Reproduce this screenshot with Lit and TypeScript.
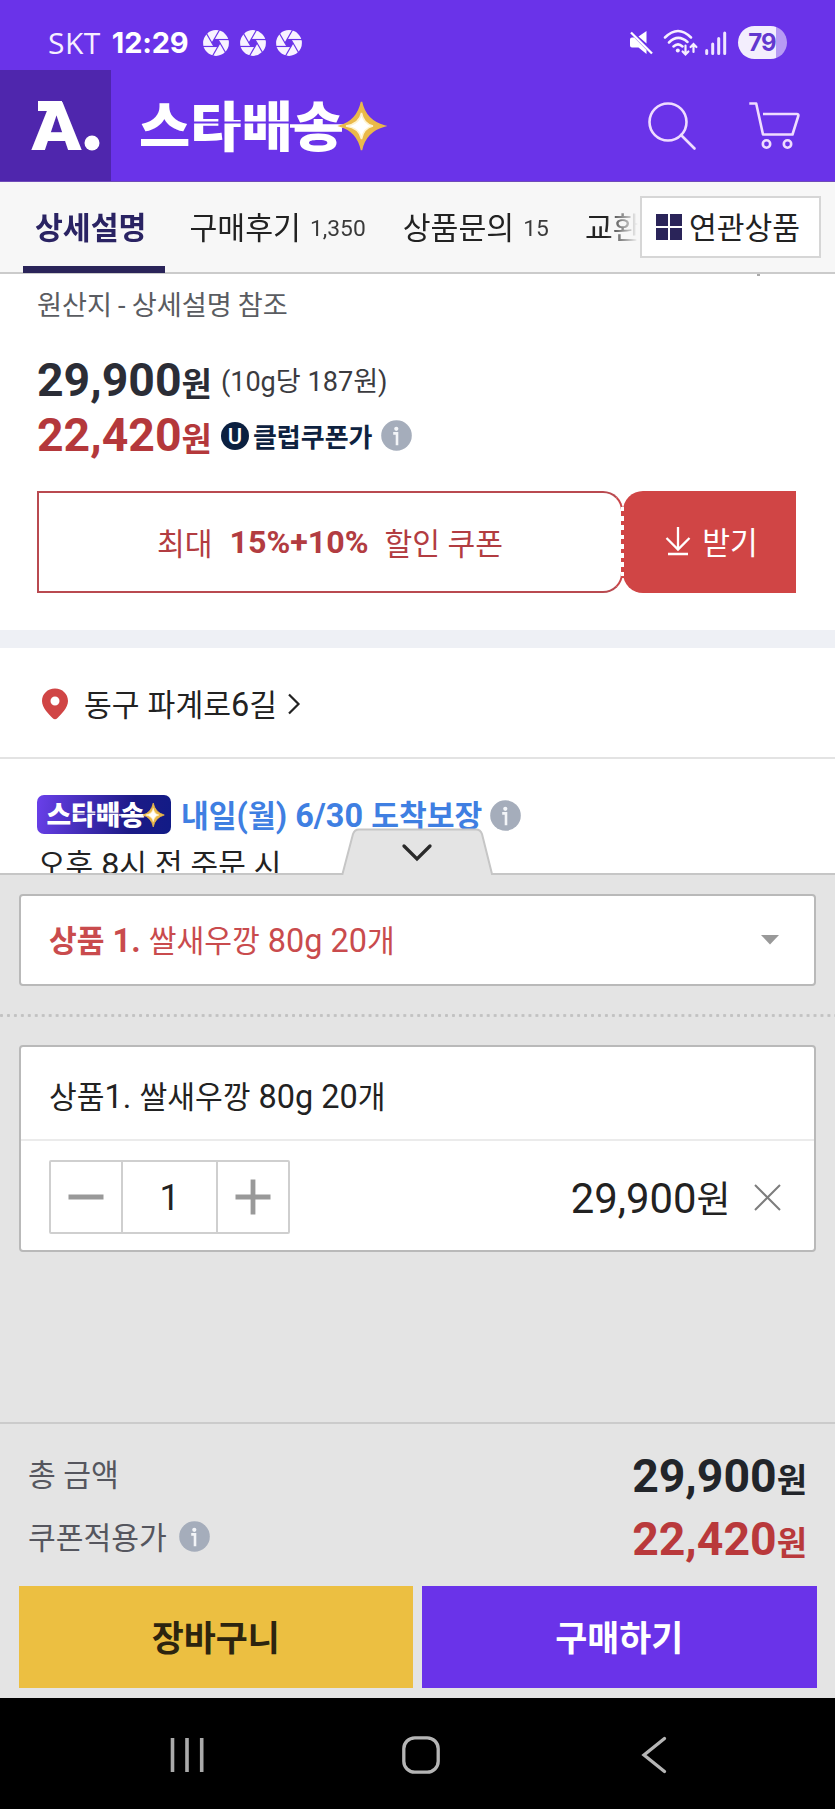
import { LitElement, html, css, svg } from "lit";
import { customElement, property, state } from "lit/decorators.js";

const won = (n: number) => n.toLocaleString("en-US");

// Latin runs are set slightly larger than the Hangul around them.
const mixed = (text: string) =>
  text.split(/([0-9A-Za-z./() ]+)/).map((part, i) => (i % 2 ? html`<span class="latin">${part}</span>` : part));

const base = css`
  * { box-sizing: border-box; }
  svg { display: block; flex: none; }
  .row { display: flex; align-items: center; white-space: nowrap; }
  .latin { font-size: 1.075em; line-height: 1; white-space: pre; }
`;

@customElement("info-dot")
class InfoDot extends LitElement {
  static styles = css`
    :host { display: block; flex: none; width: 31px; height: 31px; }
    svg { display: block; }
  `;
  render() {
    return html`<svg width="31" height="31" viewBox="0 0 31 31">
      <circle cx="15.5" cy="15.5" r="15.3" fill="#a5adbb" />
      <circle cx="15.3" cy="8.8" r="2.1" fill="#f3f5f8" />
      <path d="M12.2 13.4h3.8v11.8" fill="none" stroke="#f3f5f8" stroke-width="2.6" />
    </svg>`;
  }
}

@customElement("star-logo")
class StarLogo extends LitElement {
  @property({ type: Number }) width = 246;
  @property({ type: Number }) height = 56;
  @property() cut = "#6a33e9";
  static styles = css`
    :host { display: block; flex: none; }
    svg { display: block; overflow: visible; }
    text { font: 900 54px "Noto Sans CJK KR", sans-serif; }
  `;
  render() {
    return html`<svg width=${this.width} height=${this.height} viewBox="0 0 246 56" preserveAspectRatio="none">
      <text x="-1" y="48.500" fill="#fff" textLength="205" lengthAdjust="spacingAndGlyphs">스타배송</text>
      <path d="M52 24.500H156" stroke=${this.cut} stroke-width="1.800" />
      <path d="M150 28H222" stroke="#fff" stroke-width="3.400" />
      <path d="M221.500 4Q225.500 23 244.500 28Q225.500 33 221.500 52Q217.500 33 200 28Q217.500 23 221.500 4Z" fill="#eab94a" stroke="#eab94a" stroke-width="1.500" />
      <path d="M221.500 15Q223.500 26 233 28Q223.500 30 221.500 41Q219.500 30 206 28Q219.500 26 221.500 15Z" fill="#fff" stroke="#fff3cf" stroke-width="1.500" />
    </svg>`;
  }
}

@customElement("status-bar")
class StatusBar extends LitElement {
  static styles = [base, css`
    :host { display: block; height: 70px; background: #6a33e9; color: #f6efff; }
    .bar { height: 70px; padding: 15px 48px 0 48px; justify-content: space-between; }
    .carrier { font: 400 30px/40px "Open Sans", sans-serif; letter-spacing: .5px; }
    .time { font: 700 29px/40px Inter, sans-serif; margin-left: 11px; letter-spacing: -.2px; color: #fff; }
    .apps { display: flex; gap: 10.5px; margin-left: 15px; }
    .wifi { margin-left: 9px; }
    .signal { margin-left: 6px; }
    .battery { width: 49px; height: 33px; border-radius: 17px; margin-left: 11px; padding-right: 1px;
      background: linear-gradient(90deg, #f3eefd 0 38px, #b79bf4 38px); color: #6338cf;
      font: 700 24px/33px Inter, sans-serif; text-align: center; letter-spacing: -1px; }
  `];
  aperture() {
    const blades = [0, 60, 120, 180, 240, 300].map(
      (a) => svg`<path d="M-2 -3.460H13" transform="rotate(${a})" stroke="#6a33e9" stroke-width="1.200" />`);
    return html`<svg width="26" height="26" viewBox="-13 -13 26 26">
      <circle r="12.900" fill="#f8f3ff" />${blades}
      <path d="M-2 -3.460H2L4 0L2 3.460H-2L-4 0Z" fill="#6a33e9" />
    </svg>`;
  }
  render() {
    return html`<div class="row bar">
      <div class="row">
        <span class="carrier">SKT</span><span class="time">12:29</span>
        <div class="apps">${this.aperture()}${this.aperture()}${this.aperture()}</div>
      </div>
      <div class="row">
        <svg width="25" height="26" viewBox="0 0 25 26">
          <path d="M1 9.500Q1 7.500 3 7.500H5.200L17.500 20V24L9.500 17.500H3Q1 17.500 1 15.500Z" fill="#fff" />
          <path d="M9.500 6.500L17.500 1V13.500Z" fill="#fff" />
          <path d="M2 2.500L23 23.500" stroke="#fff" stroke-width="2.300" />
        </svg>
        <svg class="wifi" width="36" height="28" viewBox="0 0 36 28">
          <g fill="none" stroke="#f6efff" stroke-width="2.500" stroke-linecap="round">
            <path d="M2 8.500Q15 -4.500 28 8.500M6 13.500Q15 4.500 24.500 13M10.500 17.500Q15 13.300 19.500 17.500" />
            <path d="M22.500 16.500V25M19.600 22.500L22.500 25.500L25.400 22.500M30.500 23V15.500M27.600 18L30.500 15L33.400 18" stroke-width="2.200" />
          </g>
          <circle cx="14.800" cy="21.500" r="2" fill="#f6efff" />
        </svg>
        <svg class="signal" width="22" height="24" viewBox="0 0 22 24">
          <path d="M1.700 22.500V19.500M7.700 22.500V13M13.700 22.500V7.500M19.700 22.500V2" stroke="#f0e6ff" stroke-width="3" stroke-linecap="round" />
        </svg>
        <div class="battery">79</div>
      </div>
    </div>`;
  }
}

@customElement("shop-header")
class ShopHeader extends LitElement {
  static styles = [base, css`
    :host { display: block; }
    .head { height: 112px; background: #6a33e9; border-bottom: 1px solid #6f4bb8; }
    .home { width: 111px; height: 111px; background: #4f26ad; flex: none; }
    .home text { font: 900 66px Roboto, sans-serif; }
    star-logo { margin: 0 0 0 29px; }
    .actions { display: flex; margin-left: auto; padding: 1px 35px 0 0; gap: 51px; }
  `];
  render() {
    return html`<div class="row head">
      <div class="home">
        <svg width="111" height="111" viewBox="0 0 111 111">
          <text x="31.500" y="80" fill="#fff" textLength="50" lengthAdjust="spacingAndGlyphs">A</text>
          <rect x="38" y="31" width="24" height="10" fill="#fff" />
          <circle cx="92" cy="73" r="7.500" fill="#fff" />
        </svg>
      </div>
      <star-logo></star-logo>
      <div class="actions">
        <svg width="49" height="50" viewBox="0 0 49 50" fill="none" stroke="#efdcff" stroke-width="2.600">
          <circle cx="20" cy="21" r="18.500" /><path d="M33 34L46.500 47.500" stroke-linecap="round" />
        </svg>
        <svg width="52" height="50" viewBox="0 0 52 50" fill="none" stroke="#efdcff" stroke-width="2.600">
          <path d="M1.300 2.500H8.200L15 33.500H44.500L50.300 15Q50.800 13 48.800 13H15" stroke-linejoin="round" />
          <circle cx="18.500" cy="43" r="3.700" /><circle cx="39.500" cy="43" r="3.700" />
        </svg>
      </div>
    </div>`;
  }
}

@customElement("tab-strip")
class TabStrip extends LitElement {
  @state() private active = 0;
  tabs = [
    { label: "상세설명", count: "" },
    { label: "구매후기", count: "1,350" },
    { label: "상품문의", count: "15" },
    { label: "교환", count: "" },
  ];
  static styles = [base, css`
    :host { display: block; }
    .strip { height: 92px; background: #f7f7f7; border-bottom: 2px solid #cbcbcb; }
    .tabs { display: flex; width: 640px; height: 92px; padding-left: 23px; flex: none; overflow: hidden;
      -webkit-mask-image: linear-gradient(90deg, #000 606px, transparent 638px); }
    .tab { height: 92px; font-size: 30.3px; line-height: 85px; color: #222; padding: 3px 12px 0; margin-right: 13px; }
    .tab:last-child { padding-left: 11px; }
    .on { font-weight: 700; color: #2a2363; border-bottom: 7px solid #2a2459; padding: 9px 18px 0 12px; }
    .n { font-size: 22.8px; color: #3a3a3a; margin-left: 9px; }
    .related { width: 181px; height: 62px; border: 2px solid #d6d6d6; background: #fff;
      font-size: 30.2px; line-height: 56px; color: #222; padding-left: 14px; gap: 7px; }
    .related span { margin-top: 1px; height: 54px; }
  `];
  render() {
    return html`<div class="row strip">
      <div class="tabs">
        ${this.tabs.map((t, i) => html`<div class="row tab ${i === this.active ? "on" : ""}" @click=${() => (this.active = i)}>
          ${t.label}${t.count ? html`<span class="n">${t.count}</span>` : ""}</div>`)}
      </div>
      <div class="row related">
        <svg width="26" height="26" viewBox="0 0 26 26"><path d="M0 0h12v12H0zM14 0h12v12H14zM0 14h12v12H0zM14 14h12v12H14z" fill="#2a2459" /></svg>
        <span>연관상품</span>
      </div>
    </div>`;
  }
}

@customElement("product-summary")
class ProductSummary extends LitElement {
  static styles = [base, css`
    :host { display: block; height: 599px; overflow: hidden; background: #fff; position: relative; }
    .speck { position: absolute; left: 757px; top: 0; width: 3px; height: 2px; background: #aaa; }
    .origin { margin: 9px 0 0 37px; height: 40px; font-size: 27.2px; word-spacing: -.7px; color: #5a5c61; }
    .price { height: 55px; margin-left: 37px; }
    .first { margin-top: 30px; }
    .num { font-size: 46.4px; font-weight: 700; line-height: 55px; color: #2b2d36; padding-top: 4px; }
    .num small { font-size: 33px; }
    .sale { color: #b4383b; }
    .per { font-size: 27.1px; color: #3b3b3f; margin: -2px 0 0 9px; }
    .u { margin-left: 9px; }
    .u text { font: 500 22px Roboto, sans-serif; }
    .club { font-size: 26px; font-weight: 700; color: #0e2240; margin: -1px 9px 0 4px; }
    .coupon { display: flex; margin: 28px 39px 37px 37px; height: 102px; }
    .left { width: 586px; border: 2px solid #b94a50; border-right: 2px solid #c9474a; border-radius: 0 20px 20px 0;
      justify-content: center; font-size: 30.2px; color: #b23c41; }
    .left b { margin: 0 16px 0 17px; font-size: 32.200px; }
    .get { position: relative; flex: 1; background: #d04545; color: #fff; border-radius: 20px 0 0 20px; justify-content: center;
      font-size: 30.2px; gap: 11px; padding: 0 0 2px 4px; }
    .holes { position: absolute; left: -2px; top: 16px; height: 71px; width: 3px;
      background: repeating-linear-gradient(#fff 0 4.500px, #d04545 4.500px 9.250px); }
    .band { height: 18px; background: #eef0f5; }
    .addr { height: 111px; border-bottom: 2px solid #e3e3e3; padding: 3px 0 0 41px; font-size: 30.2px; color: #222; }
    .addr .name { margin-top: -3px; }
    .pin { margin-right: 15px; }
    .go { margin-left: 10px; }
    .star { height: 39px; margin: 36px 0 0 37px; }
    .badge { width: 134px; height: 39px; border-radius: 7px; padding: 0 0 0 10px; margin-right: 10px;
      background: linear-gradient(100deg, #6a40ea, #1c1a86 70%, #111b86); }
    .eta { font-size: 30.2px; font-weight: 700; color: #3f7fe2; margin: -2px 8px 0 0; }
    .star info-dot { margin-top: 2px; }
    .note { margin: 10px 0 0 38px; font-size: 30px; line-height: 42px; color: #222; }
  `];
  render() {
    return html`
      <span class="speck"></span>
      <div class="row origin">원산지 - 상세설명 참조</div>
      <div class="row price first"><span class="num">${won(29900)}<small>원</small></span><span class="per">(10g당 187원)</span></div>
      <div class="row price"><span class="num sale">${won(22420)}<small>원</small></span>
        <svg class="u" width="28" height="28" viewBox="0 0 28 28"><circle cx="14" cy="14" r="14" fill="#0b2040" />
          <text x="14" y="21.500" text-anchor="middle" fill="#fff">U</text></svg>
        <span class="club">클럽쿠폰가</span><info-dot></info-dot></div>
      <div class="coupon">
        <div class="row left">최대<b>15%+10%</b>할인 쿠폰</div>
        <div class="row get"><span class="holes"></span>
          <svg width="26" height="30" viewBox="0 0 26 30" fill="none" stroke="#fff" stroke-width="2.300"><path d="M13 1V23M1.500 12L13 23.500L24.500 12M3 28H23" /></svg>
          받기</div>
      </div>
      <div class="band"></div>
      <div class="row addr">
        <svg class="pin" width="28" height="32" viewBox="0 0 28 32"><path fill-rule="evenodd" d="M14 0.500C6.500 0.500 1 6 1 13C1 20 8 26 11.500 30Q14 32.500 16.500 30C20 26 27 20 27 13C27 6 21.500 0.500 14 0.500ZM14 8.500a4.500 4.500 0 1 1 0 9a4.500 4.500 0 1 1 0-9Z" fill="#d04545" /></svg>
        <span class="name">${mixed("동구 파계로6길")}</span>
        <svg class="go" width="14" height="22" viewBox="0 0 14 22"><path d="M2 1.500L11.500 11L2 20.500" fill="none" stroke="#222" stroke-width="2.200" /></svg>
      </div>
      <div class="row star">
        <div class="row badge"><star-logo .width=${118} .height=${28} cut="#2f2399"></star-logo></div>
        <span class="eta">${mixed("내일(월) 6/30 도착보장")}</span><info-dot></info-dot>
      </div>
      <div class="row note"><span>${mixed("오후 8시 전 주문 시")}</span></div>`;
  }
}

@customElement("order-sheet")
class OrderSheet extends LitElement {
  @state() private qty = 1;
  static styles = [base, css`
    :host { display: block; height: 823px; background: #e4e4e4; border-top: 2px solid #c6c6c6; position: relative; }
    .handle { position: absolute; left: 341px; top: -47px; }
    .select, .item { margin: 0 19px; border: 2px solid #b9b9b9; border-radius: 4px; background: #fff; }
    .select { margin-top: 19px; height: 92px; padding: 0 34px 0 28px; font-size: 30.2px; color: #c94b4d; justify-content: space-between; }
    .select .name { margin-top: -2px; }
    .dots { height: 3px; margin: 28px 0; background: radial-gradient(circle at 1.500px 1.500px, #c2c2c2 1.300px, transparent 1.800px) 0 0 / 6.960px 3px; }
    .item { height: 207px; color: #222; }
    .title { height: 94px; border-bottom: 2px solid #ebebeb; padding: 4px 0 0 28px; font-size: 30.2px; }
    .line { height: 109px; padding: 3px 33px 0 28px; }
    .step { height: 74px; width: 241px; border: 2px solid #cfcfcf; border-radius: 2px; margin-top: -1px; }
    .btn { width: 70px; height: 70px; justify-content: center; }
    .qty { flex: 1; height: 70px; border: solid #cfcfcf; border-width: 0 2px; justify-content: center; font-size: 36px; padding-top: 3px; }
    .sum { font-size: 41.800px; margin-left: auto; padding-top: 5px; line-height: 60px; }
    .sum small { font-size: 37px; }
    .x { margin-left: 23.500px; }
    .totals { margin-top: 170px; border-top: 2px solid #cbcbcb; padding: 22px 28px 0; }
    .t { height: 62.700px; justify-content: space-between; font-size: 30.200px; color: #55565e; }
    .label { display: flex; align-items: center; gap: 12px; margin-top: -9px; }
    .label info-dot { margin-top: 2px; }
    .t b { font-size: 46.400px; line-height: 62px; color: #22252a; padding-top: 3px; }
    .t b small { font-size: 33px; }
    .t .red { color: #b9393b; }
    .buttons { display: flex; gap: 9px; margin: 14.600px 18.500px 0; }
    .buttons div { flex: 1; height: 102px; justify-content: center; font-size: 34.800px; font-weight: 700; padding-bottom: 1px; }
    .cart { background: #ecbf41; color: #2c240f; }
    .buy { background: #6a33e9; color: #fff; }
  `];
  render() {
    const total = 29900 * this.qty, sale = 22420 * this.qty;
    return html`
      <svg class="handle" width="153" height="49" viewBox="0 0 153 49">
        <path d="M1 47L12 6Q13.500 1.500 18 1.500H135Q139.500 1.500 141 6L151.500 47V49H1Z" fill="#e4e4e4" />
        <path d="M0 46H1.500L12 6Q13.500 1.500 18 1.500H135Q139.500 1.500 141 6L151 46H153" fill="none" stroke="#c6c6c6" stroke-width="2" />
        <path d="M63 18L76 31L89 18" fill="none" stroke="#2a2a2a" stroke-width="3.300" stroke-linecap="round" />
      </svg>
      <div class="row select"><span class="name"><b>${mixed("상품 1. ")}</b>${mixed("쌀새우깡 80g 20개")}</span>
        <svg width="20" height="10" viewBox="0 0 20 10"><path d="M1 0H19L10 9.500Z" fill="#999" /></svg></div>
      <div class="dots"></div>
      <div class="item">
        <div class="row title"><span>${mixed("상품1. 쌀새우깡 80g 20개")}</span></div>
        <div class="row line">
          <div class="row step">
            <div class="row btn" @click=${() => (this.qty = Math.max(1, this.qty - 1))}><svg width="36" height="36" viewBox="0 0 36 36"><path d="M.5 18H35.500" stroke="#999" stroke-width="4.800" /></svg></div>
            <div class="row qty">${this.qty}</div>
            <div class="row btn" @click=${() => (this.qty += 1)}><svg width="36" height="36" viewBox="0 0 36 36"><path d="M.5 18H35.500M18 .5V35.500" stroke="#999" stroke-width="4.800" /></svg></div>
          </div>
          <span class="sum">${won(total)}<small>원</small></span>
          <svg class="x" width="27" height="27" viewBox="0 0 27 27"><path d="M1 1L26 26M26 1L1 26" stroke="#7d7d7d" stroke-width="2" /></svg>
        </div>
      </div>
      <div class="totals">
        <div class="row t"><span class="label">총 금액</span><b>${won(total)}<small>원</small></b></div>
        <div class="row t"><div class="label">쿠폰적용가<info-dot></info-dot></div><b class="red">${won(sale)}<small>원</small></b></div>
      </div>
      <div class="buttons"><div class="row cart">장바구니</div><div class="row buy">구매하기</div></div>`;
  }
}

@customElement("system-nav")
class SystemNav extends LitElement {
  static styles = [base, css`
    :host { display: block; height: 113px; background: #000; }
    .nav { height: 113px; padding: 0 168px 0 169px; justify-content: space-between; }
    .home { margin-right: 4px; }
  `];
  render() {
    return html`<div class="row nav">
      <svg width="36" height="38" viewBox="0 0 36 38"><path d="M3.500 2V36M18 2V36M32.700 2V36" stroke="#aaa" stroke-width="3.600" /></svg>
      <svg class="home" width="38" height="38" viewBox="0 0 38 38"><rect x="1.800" y="1.800" width="34.400" height="34.400" rx="11" fill="none" stroke="#b5b5b5" stroke-width="3.300" /></svg>
      <svg width="26" height="38" viewBox="0 0 26 38"><path d="M23.500 2.500L3 19L23.500 35.500" fill="none" stroke="#b5b5b5" stroke-width="3.300" stroke-linecap="round" /></svg>
    </div>`;
  }
}

@customElement("app-root")
class AppRoot extends LitElement {
  static styles = css`
    :host { display: block; width: 835px; height: 1809px; overflow: hidden; background: #fff;
      font-family: Roboto, "Noto Sans CJK KR", sans-serif; }
  `;
  render() {
    return html`<status-bar></status-bar><shop-header></shop-header><tab-strip></tab-strip>
      <product-summary></product-summary><order-sheet></order-sheet><system-nav></system-nav>`;
  }
}
